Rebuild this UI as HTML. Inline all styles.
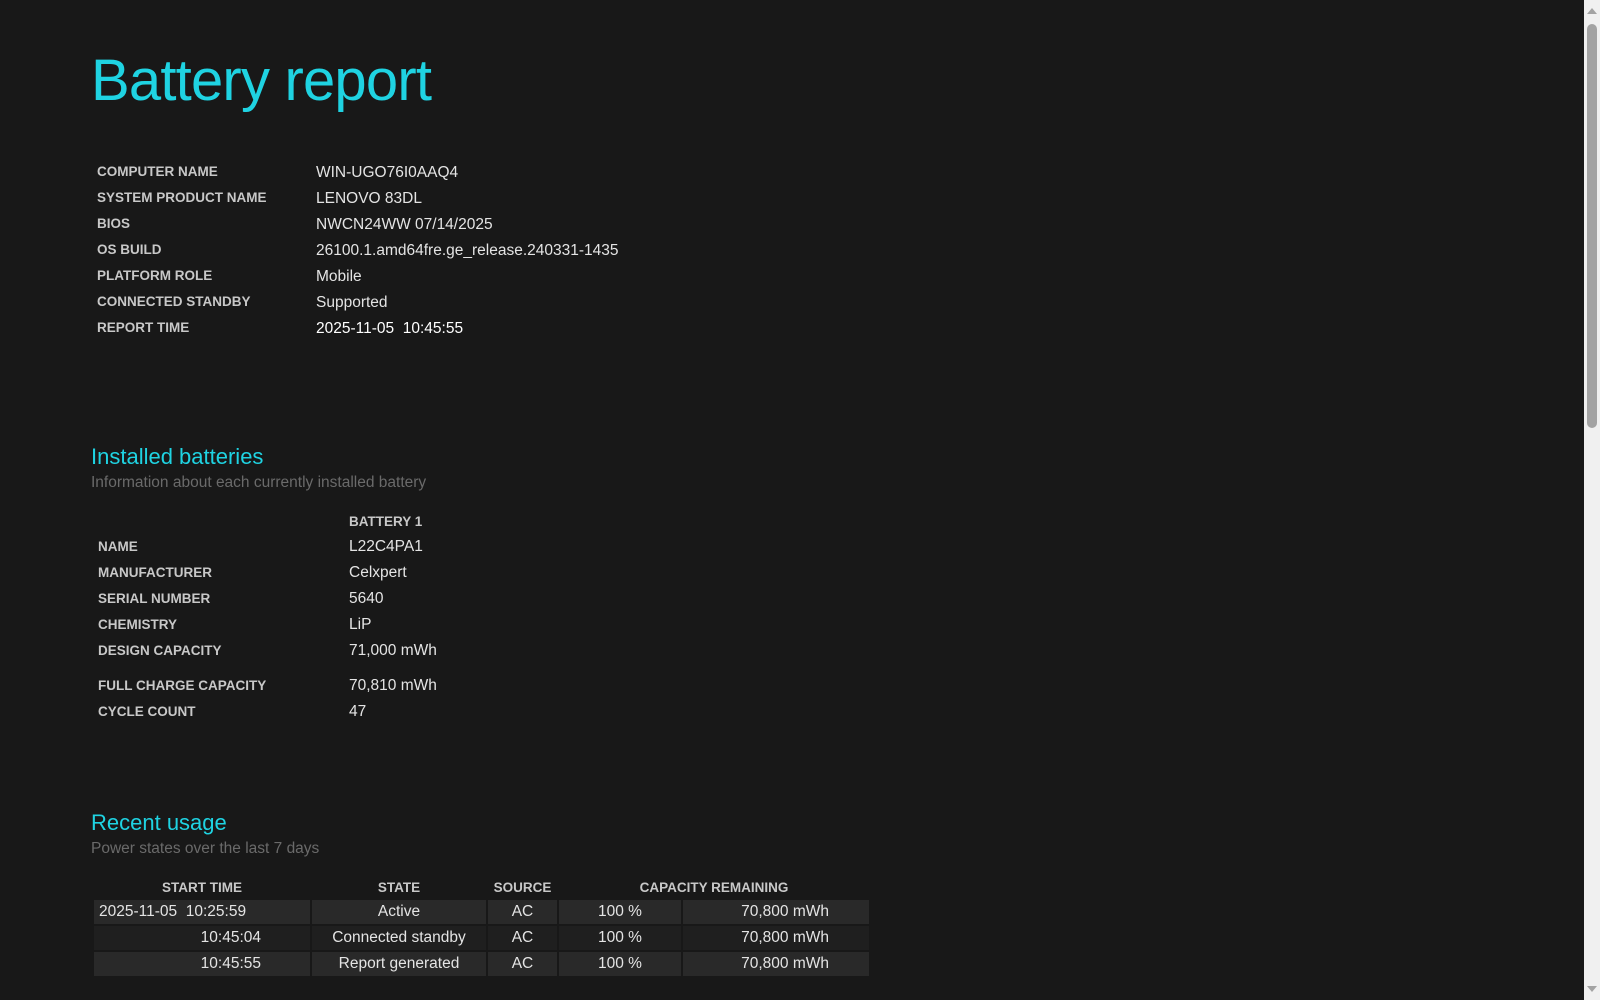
<!DOCTYPE html>
<html><head><meta charset="utf-8"><style>
html,body{margin:0;padding:0;width:1600px;height:1000px;overflow:hidden;background:#181818;font-family:"Liberation Sans",sans-serif;color:#e0e0e0}
.a{position:absolute;white-space:nowrap}
h1{position:absolute;left:91px;top:47px;margin:0;font-weight:normal;font-size:58px;color:#1fd3e2;letter-spacing:-0.8px}
.lab{font-weight:bold;font-size:13.5px;color:#c8c8c8;}
.val{font-size:15.5px;color:#e4e4e4;margin-top:2px}
h2{position:absolute;margin:0;font-weight:normal;font-size:22px;color:#1fd3e2;margin-top:1px}
.sub{font-size:15.5px;color:#6a6a6a;margin-top:2px}
table{position:absolute;left:92px;top:874px;border-collapse:separate;border-spacing:2px;font-size:15.5px;color:#e4e4e4}
th{font-size:13.5px;color:#c8c8c8;font-weight:bold;height:22px;padding:0}
td{height:24px;padding:0 6px;text-align:center}
tr.o td{background:#292929}
tr.e td{background:#1f1f1f}
.sb{position:absolute;left:1584px;top:0;width:16px;height:1000px;background:#f0f0f0}
.th{position:absolute;left:1587px;top:24px;width:10px;height:404px;background:#a3a3a3;border-radius:5px}
</style></head><body>
<h1>Battery report</h1>
<div class="a lab" style="left:97px;top:164px">COMPUTER NAME</div><div class="a val" style="left:316px;top:162px">WIN-UGO76I0AAQ4</div>
<div class="a lab" style="left:97px;top:190px">SYSTEM PRODUCT NAME</div><div class="a val" style="left:316px;top:188px">LENOVO 83DL</div>
<div class="a lab" style="left:97px;top:216px">BIOS</div><div class="a val" style="left:316px;top:214px">NWCN24WW 07/14/2025</div>
<div class="a lab" style="left:97px;top:242px">OS BUILD</div><div class="a val" style="left:316px;top:240px">26100.1.amd64fre.ge_release.240331-1435</div>
<div class="a lab" style="left:97px;top:268px">PLATFORM ROLE</div><div class="a val" style="left:316px;top:266px">Mobile</div>
<div class="a lab" style="left:97px;top:294px">CONNECTED STANDBY</div><div class="a val" style="left:316px;top:292px">Supported</div>
<div class="a lab" style="left:97px;top:320px">REPORT TIME</div><div class="a val" style="left:316px;top:318px;color:#fff">2025-11-05&nbsp; 10:45:55</div>

<h2 style="left:91px;top:443px">Installed batteries</h2>
<div class="a sub" style="left:91px;top:472px">Information about each currently installed battery</div>
<div class="a lab" style="left:349px;top:514px">BATTERY 1</div>
<div class="a lab" style="left:98px;top:539px">NAME</div><div class="a val" style="left:349px;top:536px">L22C4PA1</div>
<div class="a lab" style="left:98px;top:565px">MANUFACTURER</div><div class="a val" style="left:349px;top:562px">Celxpert</div>
<div class="a lab" style="left:98px;top:591px">SERIAL NUMBER</div><div class="a val" style="left:349px;top:588px">5640</div>
<div class="a lab" style="left:98px;top:617px">CHEMISTRY</div><div class="a val" style="left:349px;top:614px">LiP</div>
<div class="a lab" style="left:98px;top:643px">DESIGN CAPACITY</div><div class="a val" style="left:349px;top:640px">71,000 mWh</div>
<div class="a lab" style="left:98px;top:678px">FULL CHARGE CAPACITY</div><div class="a val" style="left:349px;top:675px">70,810 mWh</div>
<div class="a lab" style="left:98px;top:704px">CYCLE COUNT</div><div class="a val" style="left:349px;top:701px">47</div>

<h2 style="left:91px;top:809px">Recent usage</h2>
<div class="a sub" style="left:91px;top:838px">Power states over the last 7 days</div>
<table>
<tr><th style="width:216px">START TIME</th><th style="width:174px">STATE</th><th style="width:69px">SOURCE</th><th colspan="2">CAPACITY REMAINING</th></tr>
<tr class="o"><td style="text-align:left;padding-left:5px">2025-11-05&nbsp; 10:25:59</td><td>Active</td><td>AC</td><td style="width:110px">100 %</td><td style="width:140px;text-align:right;padding-right:40px">70,800 mWh</td></tr>
<tr class="e"><td style="text-align:right;padding-right:49px">10:45:04</td><td>Connected standby</td><td>AC</td><td>100 %</td><td style="text-align:right;padding-right:40px">70,800 mWh</td></tr>
<tr class="o"><td style="text-align:right;padding-right:49px">10:45:55</td><td>Report generated</td><td>AC</td><td>100 %</td><td style="text-align:right;padding-right:40px">70,800 mWh</td></tr>
</table>
<div class="sb"></div><div class="th"></div>
<div class="a" style="left:1587px;top:8px;width:0;height:0;border-left:5px solid transparent;border-right:5px solid transparent;border-bottom:6px solid #a3a3a3"></div>
<div class="a" style="left:1587px;top:986px;width:0;height:0;border-left:5px solid transparent;border-right:5px solid transparent;border-top:6px solid #a3a3a3"></div>
</body></html>
